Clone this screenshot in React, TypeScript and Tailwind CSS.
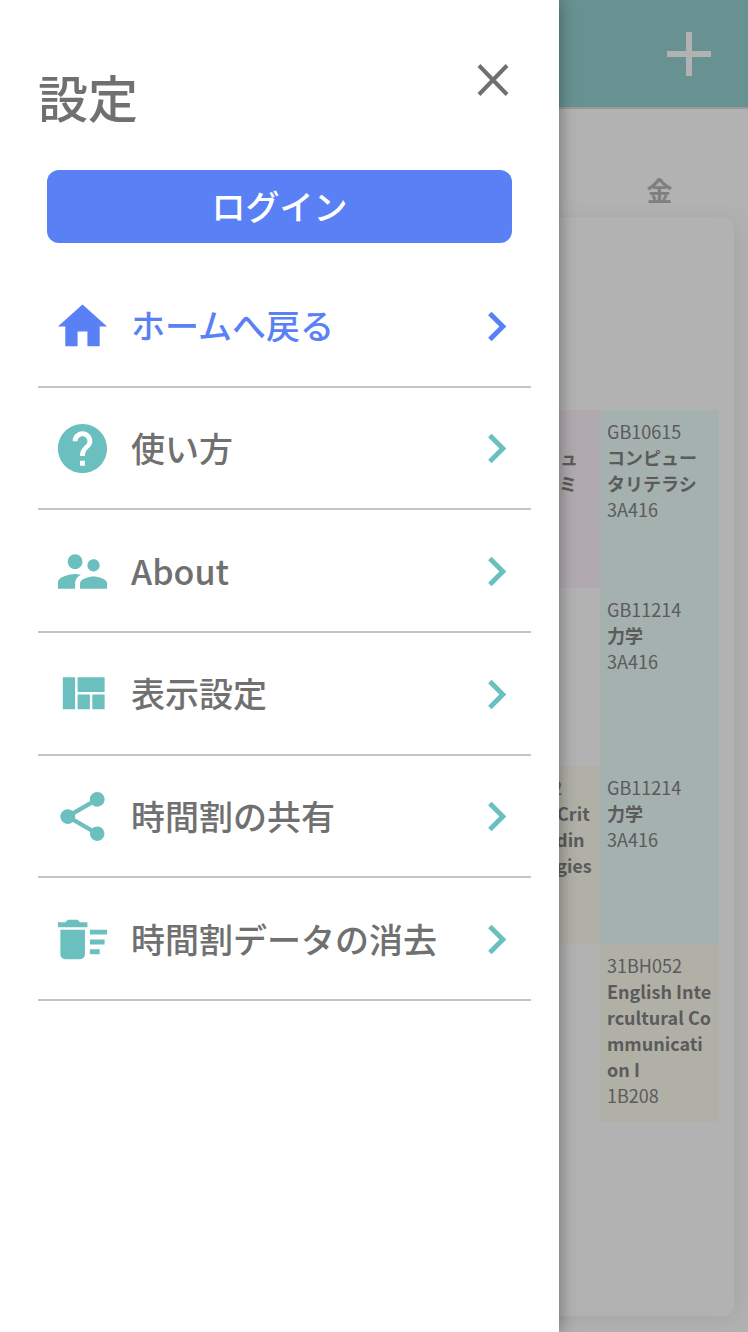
import React from 'react';

const icons = {
  home: 'M10 20v-6h4v6h5v-8h3L12 3 2 12h3v8z',
  help: 'M12 2C6.48 2 2 6.48 2 12s4.48 10 10 10 10-4.48 10-10S17.52 2 12 2zm1 17h-2v-2h2v2zm2.07-7.75l-.9.92C13.45 12.9 13 13.5 13 15h-2v-.5c0-1.1.45-2.1 1.17-2.83l1.24-1.26c.37-.36.59-.86.59-1.41 0-1.1-.9-2-2-2s-2 .9-2 2H8c0-2.21 1.79-4 4-4s4 1.79 4 4c0 .88-.36 1.68-.93 2.25z',
  people:
    'M16.5 12c1.38 0 2.49-1.12 2.49-2.5S17.88 7 16.5 7C15.12 7 14 8.12 14 9.5s1.12 2.5 2.5 2.5zM9 11c1.66 0 2.99-1.34 2.99-3S10.66 5 9 5C7.34 5 6 6.34 6 8s1.34 3 3 3zm7.5 3c-1.83 0-5.5.92-5.5 2.75V19h11v-2.25c0-1.83-3.67-2.75-5.5-2.75zM9 13c-2.33 0-7 1.17-7 3.5V19h7v-2.25c0-.85.33-2.34 2.37-3.47C10.5 13.1 9.66 13 9 13z',
  quilt: 'M10 18h5v-6h-5v6zm-6 0h5V5H4v13zm12 0h5v-6h-5v6zM10 5v6h11V5H10z',
  share:
    'M18 16.08c-.76 0-1.44.3-1.96.77L8.91 12.7c.05-.23.09-.46.09-.7s-.04-.47-.09-.7l7.05-4.11c.54.5 1.25.81 2.04.81 1.66 0 3-1.34 3-3s-1.34-3-3-3-3 1.34-3 3c0 .24.04.47.09.7L8.04 9.81C7.5 9.31 6.79 9 6 9c-1.66 0-3 1.34-3 3s1.34 3 3 3c.79 0 1.5-.31 2.04-.81l7.12 4.16c-.05.21-.08.43-.08.65 0 1.61 1.31 2.92 2.92 2.92s2.92-1.31 2.92-2.92-1.31-2.92-2.92-2.92z',
  sweep:
    'M15 16h4v2h-4zm0-8h7v2h-7zm0 4h6v2h-6zM3 18c0 1.1.9 2 2 2h6c1.1 0 2-.9 2-2V8H3v10zM14 5h-3l-1-1H6L5 5H2v2h12z',
  chevron: 'M10 6L8.59 7.41 13.17 12l-4.58 4.59L10 18l6-6z',
};

function Icon({ name }: { name: keyof typeof icons }) {
  return (
    <svg viewBox="0 0 24 24" className="size-[59px] shrink-0 fill-current" aria-hidden="true">
      <path d={icons[name]} />
    </svg>
  );
}

const menu: { icon: keyof typeof icons; label: string; active?: boolean }[] = [
  { icon: 'home', label: 'ホームへ戻る', active: true },
  { icon: 'help', label: '使い方' },
  { icon: 'people', label: 'About' },
  { icon: 'quilt', label: '表示設定' },
  { icon: 'share', label: '時間割の共有' },
  { icon: 'sweep', label: '時間割データの消去' },
];

type Course = { code: string; name: string; room: string; tone: string };

const teal = 'bg-[#edfefa]';
const pink = 'bg-[#fdf4f9]';
const yellow = 'bg-[#fdfdef]';

const days = ['月', '火', '水', '木', '金'];

const periods: (Course | null)[][] = [
  [null, null, null, null, null],
  [
    null,
    null,
    null,
    { code: 'GB10', name: '情報コミュニティゼミ', room: '3A', tone: pink },
    { code: 'GB10615', name: 'コンピュータリテラシ', room: '3A416', tone: teal },
  ],
  [null, null, null, null, { code: 'GB11214', name: '力学', room: '3A416', tone: teal }],
  [
    null,
    null,
    null,
    { code: '31BG112', name: 'English Critical Reading Strategies', room: '1B', tone: yellow },
    { code: 'GB11214', name: '力学', room: '3A416', tone: teal },
  ],
  [
    null,
    null,
    null,
    null,
    { code: '31BH052', name: 'English Intercultural Communication I', room: '1B208', tone: yellow },
  ],
  [null, null, null, null, null],
];

function Timetable() {
  return (
    <div className="flex min-h-screen flex-col bg-white text-[#838383]">
      <header className="flex h-[109px] shrink-0 items-center justify-end border-b-2 border-[#dcdcdc] bg-[#96d2d1] pr-[29px]">
        <button type="button" aria-label="追加" className="flex size-[60px] items-center justify-center text-white">
          <svg viewBox="0 0 44 44" className="size-[44px]" aria-hidden="true">
            <path d="M22 0v44M0 22h44" stroke="currentColor" strokeWidth="6" fill="none" />
          </svg>
        </button>
      </header>
      <main className="flex flex-col px-[14px] pt-[60px] pb-4">
        <div className="flex h-12 pr-[15px] pl-[110px] text-[26px] leading-[42px] font-bold text-[#b7b7b7]">
          {days.map((day) => (
            <span key={day} className="flex-1 text-center">
              {day}
            </span>
          ))}
        </div>
        <section className="rounded-xl bg-white px-[15px] pt-[15px] pb-4 shadow-[4px_4px_24px_rgba(0,0,0,0.08)]">
          <table className="w-full table-fixed border-collapse text-[18px] leading-[26px]">
            <tbody>
              {periods.map((row, p) => (
                <tr key={p} className="h-[178px]">
                  <th scope="row" className="w-[95px] text-center">
                    {p + 1}
                  </th>
                  {row.map((course, d) => (
                    <td
                      key={d}
                      className={`py-2 pr-[6px] pl-[7px] align-top break-all ${course ? course.tone : ''}`}
                    >
                      {course && (
                        <>
                          <div>{course.code}</div>
                          <div className="font-bold">{course.name}</div>
                          <div>{course.room}</div>
                        </>
                      )}
                    </td>
                  ))}
                </tr>
              ))}
            </tbody>
          </table>
        </section>
      </main>
    </div>
  );
}

function Drawer() {
  return (
    <aside className="absolute inset-y-0 left-0 w-[calc(75%-2px)] overflow-hidden bg-white pt-[58px] pr-7 pl-[38px] text-[#707070]">
      <div className="flex items-start justify-between pr-4">
        <h1 className="mt-2 text-[50px] leading-[60px] font-medium">設定</h1>
        <button type="button" aria-label="閉じる" className="flex size-[44px] items-center justify-center">
          <svg viewBox="0 0 32 32" className="size-8" aria-hidden="true">
            <path d="M2 1.5l28 29M30 1.5l-28 29" stroke="currentColor" strokeWidth="4" fill="none" />
          </svg>
        </button>
      </div>
      <div className="mt-11 flex pr-[19px] pl-[9px]">
        <button
          type="button"
          className="h-[73px] flex-1 rounded-xl bg-[#5a80f5] pb-0.5 text-[34px] leading-[50px] font-medium text-white"
        >
          ログイン
        </button>
      </div>
      <nav className="mt-[22px]">
        <ul className="grid h-[736px] grid-rows-6">
          {menu.map((item) => (
            <li key={item.label} className="border-b-2 border-[#c4c4c4]">
              <a
                href="#"
                className={`flex h-full items-center pt-0.5 pr-[5px] pl-[15px] ${
                  item.active ? 'text-[#5a80f5]' : 'text-[#6bbfbf]'
                }`}
              >
                <Icon name={item.icon} />
                <span
                  className={`ml-[19px] flex-1 pb-0.5 text-[34px] leading-[50px] font-medium whitespace-nowrap ${
                    item.active ? '' : 'text-[#707070]'
                  }`}
                >
                  {item.label}
                </span>
                <Icon name="chevron" />
              </a>
            </li>
          ))}
        </ul>
      </nav>
    </aside>
  );
}

export default function App() {
  return (
    <div lang="ja" className="relative overflow-hidden font-['Noto_Sans_CJK_JP',sans-serif]">
      <Timetable />
      <div className="absolute inset-0 bg-black/30" />
      <div className="absolute inset-y-0 left-0 w-[calc(75%-2px)] shadow-[0_0_16px_rgba(0,0,0,0.4)]" />
      <Drawer />
    </div>
  );
}
